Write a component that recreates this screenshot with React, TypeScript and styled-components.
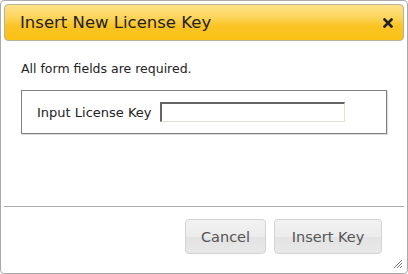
import styled, { createGlobalStyle } from "styled-components";

const GlobalStyle = createGlobalStyle`
  html, body {
    margin: 0;
    padding: 0;
    background: #ffffff;
  }
  body {
    font-family: "DejaVu Sans", Verdana, sans-serif;
  }
`;

const Dialog = styled.div`
  width: 408px;
  height: 274px;
  box-sizing: border-box;
  border: 1px solid #aaaaaa;
  border-radius: 4px;
  padding: 3px;
  background: #ffffff;
  display: flex;
  flex-direction: column;
  position: relative;
`;

const TitleBar = styled.div`
  height: 37px;
  box-sizing: border-box;
  border: 1px solid #b9b29a;
  border-radius: 4px;
  background: linear-gradient(#fde189 0%, #fcd55c 35%, #fbc424 60%, #fbc116 100%);
  display: flex;
  align-items: center;
  justify-content: space-between;
  padding: 0 9px 0 15px;
`;

const Title = styled.span`
  font-size: 16.5px;
  color: #222222;
`;

const CloseButton = styled.button`
  width: 12px;
  height: 12px;
  padding: 0;
  border: none;
  background: none;
  display: flex;
  align-items: center;
  justify-content: center;
  cursor: pointer;
`;

const Content = styled.div`
  flex: 1;
  padding: 20px 17px 0 17px;
`;

const Note = styled.p`
  margin: 0 0 14px 0;
  font-size: 12.5px;
  line-height: 15px;
  color: #222222;
`;

const FieldSet = styled.fieldset`
  margin: 0;
  width: 366px;
  height: 44px;
  box-sizing: border-box;
  border: 1px solid #808080;
  box-shadow: 1px 1px 0 #dcdcdc;
  padding: 0 0 0 15px;
  display: flex;
  align-items: center;
  gap: 8px;
`;

const Label = styled.label`
  font-size: 13px;
  color: #222222;
`;

const KeyInput = styled.input`
  width: 185px;
  height: 20px;
  box-sizing: border-box;
  border-style: solid;
  border-width: 2px 1px 1px 2px;
  border-color: #666666 #e2e0d2 #e2e0d2 #666666;
  padding: 0 3px;
  font-family: inherit;
  font-size: 12px;
  outline: none;
`;

const ButtonPane = styled.div`
  height: 64px;
  border-top: 1px solid #aaaaaa;
  display: flex;
  justify-content: flex-end;
  align-items: flex-start;
  gap: 8px;
  padding: 12px 22px 0 0;
  box-sizing: border-box;
`;

const Button = styled.button<{ $w: number }>`
  width: ${(p) => p.$w}px;
  height: 35px;
  border: 1px solid #d3d3d3;
  border-radius: 4px;
  background: linear-gradient(#f2f2f2 0%, #ececec 50%, #e3e3e3 51%, #e8e8e8 100%);
  color: #555555;
  font-family: "DejaVu Sans", Verdana, sans-serif;
  font-size: 14.5px;
  padding: 0;
  cursor: pointer;
`;

const Grip = styled.svg`
  position: absolute;
  right: 4px;
  bottom: 4px;
`;

export default function App() {
  return (
    <>
      <GlobalStyle />
      <Dialog>
        <TitleBar>
          <Title>Insert New License Key</Title>
          <CloseButton aria-label="close">
            <svg width="10" height="10" viewBox="0 0 10 10">
              <path d="M1.5 1.5 L8.5 8.5 M8.5 1.5 L1.5 8.5" stroke="#222" strokeWidth="2.6" strokeLinecap="square" />
            </svg>
          </CloseButton>
        </TitleBar>
        <Content>
          <Note>All form fields are required.</Note>
          <FieldSet>
            <Label htmlFor="key">Input License Key</Label>
            <KeyInput id="key" type="text" />
          </FieldSet>
        </Content>
        <ButtonPane>
          <Button $w={81}>Cancel</Button>
          <Button $w={108}>Insert Key</Button>
        </ButtonPane>
        <Grip width="10" height="10" viewBox="0 0 10 10">
          <path d="M1 9 L9 1 M4 9 L9 4 M7 9 L9 7" stroke="#777" strokeWidth="1" />
        </Grip>
      </Dialog>
    </>
  );
}
